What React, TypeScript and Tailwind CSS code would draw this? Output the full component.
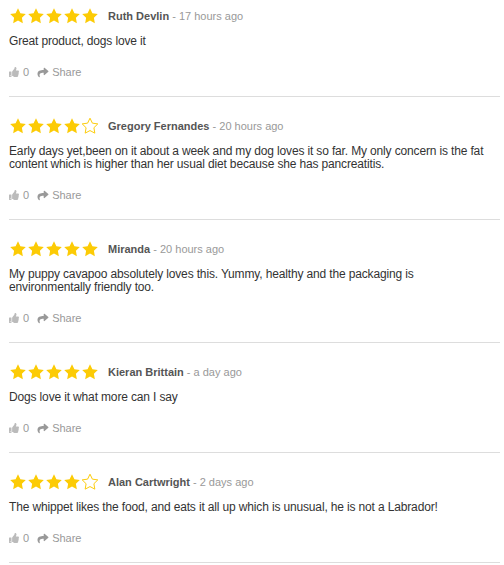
import { FaThumbsUp, FaShare } from "react-icons/fa";

type Review = {
    name: string,
    when: string,
    rating: number,
    text: string,
};

const reviews: Review[] = [
    { name: "Ruth Devlin", when: "17 hours ago", rating: 5, text: "Great product, dogs love it" },
    { name: "Gregory Fernandes", when: "20 hours ago", rating: 4, text: "Early days yet,been on it about a week and my dog loves it so far. My only concern is the fat content which is higher than her usual diet because she has pancreatitis." },
    { name: "Miranda", when: "20 hours ago", rating: 5, text: "My puppy cavapoo absolutely loves this. Yummy, healthy and the packaging is environmentally friendly too." },
    { name: "Kieran Brittain", when: "a day ago", rating: 5, text: "Dogs love it what more can I say" },
    { name: "Alan Cartwright", when: "2 days ago", rating: 4, text: "The whippet likes the food, and eats it all up which is unusual, he is not a Labrador!" },
];

const STAR = "M12 1.6l3.2 6.6 7.2 1-5.2 5.1 1.25 7.2L12 18.1l-6.45 3.4 1.25-7.2L1.6 9.2l7.2-1z";

const Star = ({ filled }: { filled: boolean }) => (
    <svg width="18" height="18" viewBox="0 0 24 24" className="shrink-0">
        <path
            d={STAR}
            fill={filled ? "#fccb05" : "none"}
            stroke="#fccb05"
            strokeWidth={filled ? 0 : 1.3}
            strokeLinejoin="miter"
        />
    </svg>
)

const ReviewItem = ({ review, first }: { review: Review, first: boolean }) => {
    return (
        <div
            className={"border-b border-[#dddddd] pb-[17px]" + (first ? " pt-[7px]" : " pt-[20px]")}
        >
            <div className="flex items-center h-[18px]">
                <div className="flex">
                    {[0, 1, 2, 3, 4].map(i => <Star key={i} filled={i < review.rating} />)}
                </div>
                <div className="ml-[9px] text-[11px] leading-none">
                    <span className="font-bold text-[#555555]">{review.name}</span>
                    <span className="text-[#999999]"> - {review.when}</span>
                </div>
            </div>
            <p className="mt-[10px] pr-[10px] text-[12px] leading-[13px] tracking-[-0.15px] text-[#333333]">{review.text}</p>
            <div className="mt-[17px] flex items-center h-[14px] text-[11px] text-[#999999]">
                <FaThumbsUp className="text-[#bbbbbb] w-[10px] h-[10px]" />
                <span className="ml-[4px]">0</span>
                <FaShare className="ml-[8px] text-[#999999] w-[12px] h-[11px]" />
                <span className="ml-[3px]">Share</span>
            </div>
        </div>
    )
}

export default function App() {
    return (
        <div className="bg-white min-h-screen pl-[9px] pr-[4px]" style={{ fontFamily: '"Liberation Sans", Arial, sans-serif' }}>
            {reviews.map((r, i) => <ReviewItem key={i} review={r} first={i === 0} />)}
        </div>
    )
}
